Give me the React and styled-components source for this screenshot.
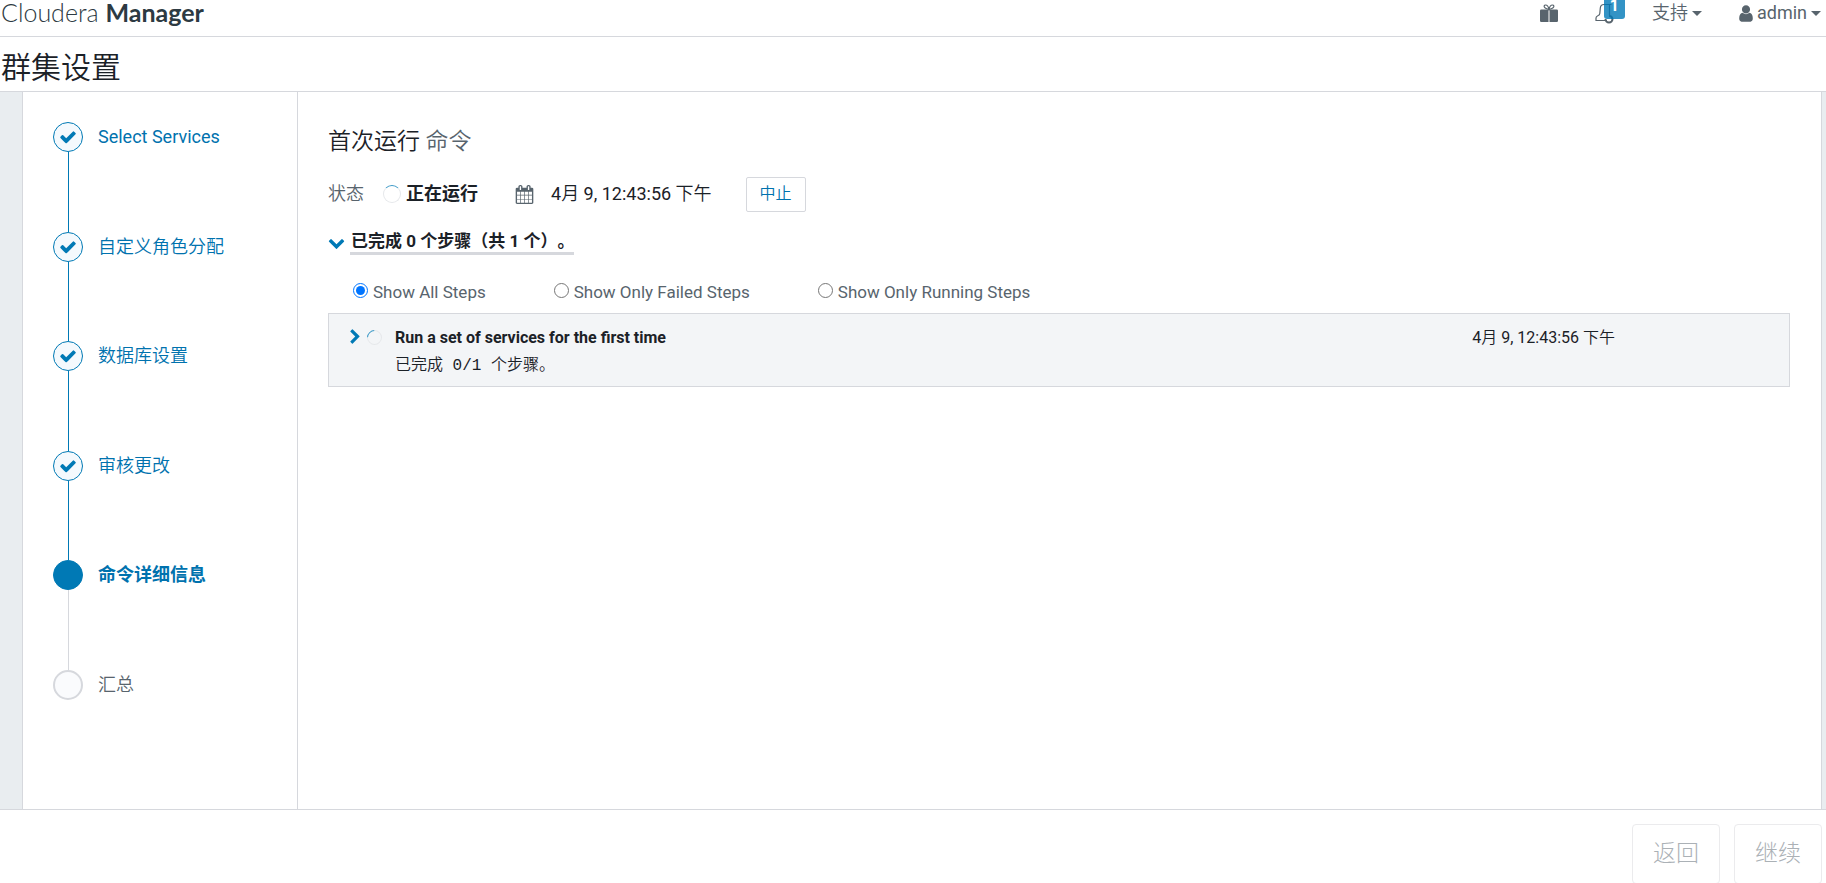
import React, { useState } from 'react'
import styled, { createGlobalStyle, css } from 'styled-components'

const GlobalStyle = createGlobalStyle`
  * {
    box-sizing: border-box;
  }
  body {
    margin: 0;
    background: #fff;
    color: #1b2127;
    font-family: Roboto, "Noto Sans CJK SC", sans-serif;
    font-size: 17px;
    line-height: 24px;
  }
`

const Page = styled.div`
  display: flex;
  flex-direction: column;
  height: 100vh;
  overflow: hidden;
`

const Header = styled.header`
  display: flex;
  justify-content: space-between;
  align-items: flex-start;
  height: 37px;
  padding: 0 5px 0 1px;
  border-bottom: 1px solid #d6d8dd;
`

const Brand = styled.a`
  color: #2d3a42;
  font-family: Lato, Roboto, sans-serif;
  font-size: 25px;
  font-weight: 300;
  text-decoration: none;

  strong {
    font-weight: 700;
  }
`

const Nav = styled.nav`
  display: flex;
  align-items: center;
  height: 26px;
`

const NavButton = styled.button`
  position: relative;
  display: flex;
  align-items: center;
  gap: 4px;
  margin-left: 37px;
  padding: 0;
  border: 0;
  background: none;
  color: #58646d;
  font: inherit;
  font-size: 18px;
  cursor: pointer;
`

const Badge = styled.span`
  position: absolute;
  top: -6px;
  left: 9px;
  width: 21px;
  height: 24px;
  border-radius: 3px;
  background: rgba(0, 120, 182, 0.8);
  color: #fff;
  font-size: 16px;
  font-weight: 700;
  line-height: 22px;
  text-align: center;
`

const Caret = styled.span`
  border: 5px solid transparent;
  border-top-color: currentColor;
  border-bottom: 0;
`

const Light = styled.span`
  font-weight: 350;
`

const PageTitle = styled.h1`
  height: 55px;
  margin: 0;
  padding: 0 1px;
  border-bottom: 1px solid #d6d8dd;
  font-size: 30px;
  font-weight: 350;
  line-height: 62px;
`

const Body = styled.div`
  flex: 1;
  display: flex;
  min-height: 0;
  padding: 0 4px 0 22px;
  background: #e9edf0;
`

const Sidebar = styled.aside`
  flex: 0 0 276px;
  padding: 30px;
  border: solid #d6d8dd;
  border-width: 0 1px;
  background: #fff;
`

const StepList = styled.ol`
  display: flex;
  flex-direction: column;
  min-height: 578px;
  margin: 0;
  padding: 0;
  list-style: none;
`

const Step = styled.li`
  flex: 1;
  display: flex;
  gap: 15px;

  &:last-child {
    flex: none;
  }
`

const StepTrack = styled.div`
  display: flex;
  flex-direction: column;
  align-items: center;
  width: 30px;
`

const StepDot = styled.span`
  display: flex;
  align-items: center;
  justify-content: center;
  flex: none;
  width: 30px;
  height: 30px;
  border: 1px solid #0079b5;
  border-radius: 50%;
  background: #f4f9fd;
  color: #0079b5;

  ${props => props.$status === 'current' && css`
    background: #0079b5;
  `}
  ${props => props.$status === 'todo' && css`
    border: 2px solid #d6d8dd;
    background: #fafbfd;
  `}
`

const StepLine = styled.span`
  flex: 1;
  width: 1px;
  background: ${props => (props.$done ? '#0079b5' : '#d6d8dd')};
`

const weights = { done: 350, current: 700, todo: 350 }

const StepLabel = styled.a`
  height: 30px;
  color: ${props => (props.$status === 'todo' ? '#58646d' : '#0072ae')};
  font-size: 18px;
  font-weight: ${props => (props.$latin ? 400 : weights[props.$status])};
  line-height: 30px;
  text-decoration: none;
`

const Main = styled.main`
  flex: 1;
  padding: 32px 31px 30px 30px;
  border-right: 1px solid #d6d8dd;
  background: #fff;
`

const CommandTitle = styled.h2`
  margin: 0 0 17px;
  font-size: 23px;
  font-weight: 350;
  line-height: 36px;

  small {
    color: #58646d;
    font-size: inherit;
  }
`

const StatusBar = styled.div`
  display: flex;
  align-items: center;
  height: 34px;
  color: #58646d;
  font-size: 18px;
`

const StatusName = styled(Light)`
  margin-right: 19px;
`

const StatusValue = styled.strong`
  margin: 0 37px 0 5px;
  color: #1b2127;
`

const StartTime = styled.time`
  margin: 0 34px 0 17px;
  color: #1b2127;
`

const AbortButton = styled.button`
  height: 35px;
  padding: 0 13px;
  border: 1px solid #d6d8dd;
  border-radius: 2px;
  background: #fff;
  color: #0072ae;
  font: inherit;
  font-size: 16px;
  font-weight: 350;
  cursor: pointer;
`

const Spinner = styled.span`
  flex: none;
  width: 18px;
  height: 18px;
  border: 1px solid #e6e8eb;
  border-top-color: #3b98c6;
  border-radius: 50%;
  transform: rotate(${props => props.$angle || 0}deg);
`

const Progress = styled.button`
  display: flex;
  align-items: center;
  gap: 5px;
  margin: 19px 0 0;
  padding: 0;
  border: 0;
  background: none;
  color: #0079b5;
  font: inherit;
  cursor: pointer;
`

const ProgressText = styled.span`
  padding-left: 1px;
  border-bottom: 3px solid #d6d8dd;
  color: #1b2127;
  font-size: 17px;
  font-weight: 700;
  line-height: 22px;
  text-spacing-trim: space-all;
`

const Filters = styled.div`
  display: flex;
  gap: 68px;
  margin: 25px 0 9px 25px;
`

const Filter = styled.label`
  display: flex;
  align-items: flex-start;
  gap: 5px;
  color: #58646d;

  input {
    width: 15px;
    height: 15px;
    margin: 3px 0 0;
    accent-color: #0075ff;
  }
`

const CommandRow = styled.section`
  display: flex;
  align-items: flex-start;
  height: 74px;
  padding: 10px 174px 0 18px;
  border: 1px solid #d6d8dd;
  background: #f3f5f7;
  font-size: 16px;
  line-height: 28px;
`

const Expand = styled.button`
  display: flex;
  align-items: center;
  height: 26px;
  margin-right: 7px;
  padding: 0;
  border: 0;
  background: none;
  color: #0079b5;
  cursor: pointer;
`

const CommandSpinner = styled(Spinner)`
  width: 15px;
  height: 15px;
  margin: 6px 13px 0 0;
`

const CommandInfo = styled.div`
  flex: 1;
`

const CommandName = styled.div`
  font-weight: 700;
`

const CommandMessage = styled.div`
  font-family: "Liberation Mono", "Noto Sans CJK SC", monospace;
  font-weight: 350;
`

const Footer = styled.footer`
  display: flex;
  flex: none;
  justify-content: flex-end;
  gap: 14px;
  height: 74px;
  padding: 14px 4px 0;
  border-top: 1px solid #d6d8dd;
  background: #fff;
`

const FooterButton = styled.button`
  flex: none;
  height: 60px;
  padding: 0 20px;
  border: 1px solid #ebebed;
  border-radius: 4px;
  background: #fff;
  color: #abb1b6;
  font: inherit;
  font-size: 23px;
  font-weight: 300;
`

const icons = {
  user: 'M1280 1399q0 109-62.5 187t-150.5 78h-854q-88 0-150.5-78t-62.5-187q0-85 8.5-160.5t31.5-152 58.5-131 94-89 134.5-34.5q131 128 313 128t313-128q76 0 134.5 34.5t94 89 58.5 131 31.5 152 8.5 160.5zm-256-887q0 159-112.5 271.5t-271.5 112.5-271.5-112.5-112.5-271.5 112.5-271.5 271.5-112.5 271.5 112.5 112.5 271.5z',
  check: 'M1671 566q0 40-28 68l-724 724-136 136q-28 28-68 28t-68-28l-136-136-362-362q-28-28-28-68t28-68l136-136q28-28 68-28t68 28l294 295 656-657q28-28 68-28t68 28l136 136q28 28 28 68z',
  right: 'M1363 877l-742 742q-19 19-45 19t-45-19l-166-166q-19-19-19-45t19-45l531-531-531-531q-19-19-19-45t19-45l166-166q19-19 45-19t45 19l742 742q19 19 19 45t-19 45z',
  down: 'M1683 808l-742 741q-19 19-45 19t-45-19l-742-741q-19-19-19-45.5t19-45.5l166-165q19-19 45-19t45 19l531 531 531-531q19-19 45-19t45 19l166 165q19 19 19 45.5t-19 45.5z',
  calendar: 'M192 1664h288v-288h-288v288zm352 0h320v-288h-320v288zm-352-352h288v-320h-288v320zm352 0h320v-320h-320v320zm-352-384h288v-288h-288v288zm736 736h320v-288h-320v288zm-384-736h320v-288h-320v288zm768 736h288v-288h-288v288zm-384-352h320v-320h-320v320zm-352-864v-288q0-13-9.5-22.5t-22.5-9.5h-64q-13 0-22.5 9.5t-9.5 22.5v288q0 13 9.5 22.5t22.5 9.5h64q13 0 22.5-9.5t9.5-22.5zm736 864h288v-320h-288v320zm-384-384h320v-288h-320v288zm384 0h288v-288h-288v288zm32-480v-288q0-13-9.5-22.5t-22.5-9.5h-64q-13 0-22.5 9.5t-9.5 22.5v288q0 13 9.5 22.5t22.5 9.5h64q13 0 22.5-9.5t9.5-22.5zm384-64v1280q0 52-38 90t-90 38h-1408q-52 0-90-38t-38-90v-1280q0-52 38-90t90-38h128v-96q0-66 47-113t113-47h64q66 0 113 47t47 113v96h384v-96q0-66 47-113t113-47h64q66 0 113 47t47 113v96h128q52 0 90 38t38 90z',
}

const Icon = ({ name, size, width = 1792 }) => (
  <svg width={Math.round((size * width) / 1792)} height={size} viewBox={`0 0 ${width} 1792`} fill="currentColor" aria-hidden="true">
    <path d={icons[name]} />
  </svg>
)

const GiftIcon = () => (
  <svg width="18" height="18" viewBox="0 0 18 18" fill="none" stroke="currentColor" aria-hidden="true">
    <path d="M1.2 5.6h7.3V18H1.2Q0 18 0 16.8V6.800Q0 5.600 1.2 5.600zM9.500 5.600h7.300Q18 5.600 18 6.800v10Q18 18 16.800 18H9.500z" fill="currentColor" stroke="none" />
    <path d="M9 5.600C8.500 3 7.500 1 5.600 1 4 1 3.600 2.800 4.900 3.700 6 4.500 7.500 5 9 5.600zM9 5.600C9.500 3 10.500 1 12.400 1c1.600 0 2 1.800.7 2.700C12 4.500 10.500 5 9 5.600z" strokeWidth="1.200" />
  </svg>
)

const BellIcon = () => (
  <svg width="20" height="24" viewBox="0 0 20 24" fill="none" stroke="currentColor" aria-hidden="true">
    <path d="M16.500 3.500H9C6.500 3.500 5.500 4.500 5.300 7L4.800 12.500C4.700 14 4 14.300 2.800 14.700 1.500 15.200 1 16 1 17v2.500h11M14.500 3.500v11" strokeWidth="1.200" />
    <path d="M10.500 18a3.500 3.500 0 0 0 7 0 3.500 3.500 0 0 0-3.500-3" strokeWidth="2" />
  </svg>
)

const steps = [
  { label: 'Select Services', status: 'done', latin: true },
  { label: '自定义角色分配', status: 'done' },
  { label: '数据库设置', status: 'done' },
  { label: '审核更改', status: 'done' },
  { label: '命令详细信息', status: 'current' },
  { label: '汇总', status: 'todo' },
]

const filters = ['Show All Steps', 'Show Only Failed Steps', 'Show Only Running Steps']

const Wizard = () => (
  <Sidebar>
    <StepList>
      {steps.map((step, i) => (
        <Step key={step.label}>
          <StepTrack>
            <StepDot $status={step.status}>
              {step.status === 'done' && <Icon name="check" size={18} />}
            </StepDot>
            {i < steps.length - 1 && <StepLine $done={step.status === 'done'} />}
          </StepTrack>
          <StepLabel href="#" $status={step.status} $latin={step.latin}>{step.label}</StepLabel>
        </Step>
      ))}
    </StepList>
  </Sidebar>
)

const Command = () => {
  const [filter, setFilter] = useState(filters[0])

  return (
    <Main>
      <CommandTitle>首次运行 <small>命令</small></CommandTitle>
      <StatusBar>
        <StatusName>状态</StatusName>
        <Spinner />
        <StatusValue>正在运行</StatusValue>
        <Icon name="calendar" size={19} />
        <StartTime>4<Light>月</Light> 9, 12:43:56 <Light>下午</Light></StartTime>
        <AbortButton type="button">中止</AbortButton>
      </StatusBar>
      <Progress type="button">
        <Icon name="down" size={17} />
        <ProgressText>已完成 0 个步骤（共 1 个）。</ProgressText>
      </Progress>
      <Filters>
        {filters.map(name => (
          <Filter key={name}>
            <input type="radio" name="steps" checked={filter === name} onChange={() => setFilter(name)} />
            {name}
          </Filter>
        ))}
      </Filters>
      <CommandRow>
        <Expand type="button" aria-label="Expand">
          <Icon name="right" size={16} width={1400} />
        </Expand>
        <CommandSpinner $angle={-45} />
        <CommandInfo>
          <CommandName>Run a set of services for the first time</CommandName>
          <CommandMessage>已完成 0/1 个步骤。</CommandMessage>
        </CommandInfo>
        <time>4<Light>月</Light> 9, 12:43:56 <Light>下午</Light></time>
      </CommandRow>
    </Main>
  )
}

const App = () => (
  <Page>
    <GlobalStyle />
    <Header>
      <Brand href="#">Cloudera <strong>Manager</strong></Brand>
      <Nav>
        <NavButton type="button" aria-label="Gift"><GiftIcon /></NavButton>
        <NavButton type="button" aria-label="Notifications">
          <BellIcon />
          <Badge>1</Badge>
        </NavButton>
        <NavButton type="button"><Light>支持</Light> <Caret /></NavButton>
        <NavButton type="button"><Icon name="user" size={19} width={1280} /> admin <Caret /></NavButton>
      </Nav>
    </Header>
    <PageTitle>群集设置</PageTitle>
    <Body>
      <Wizard />
      <Command />
    </Body>
    <Footer>
      <FooterButton type="button" disabled>返回</FooterButton>
      <FooterButton type="button" disabled>继续</FooterButton>
    </Footer>
  </Page>
)

export default App
